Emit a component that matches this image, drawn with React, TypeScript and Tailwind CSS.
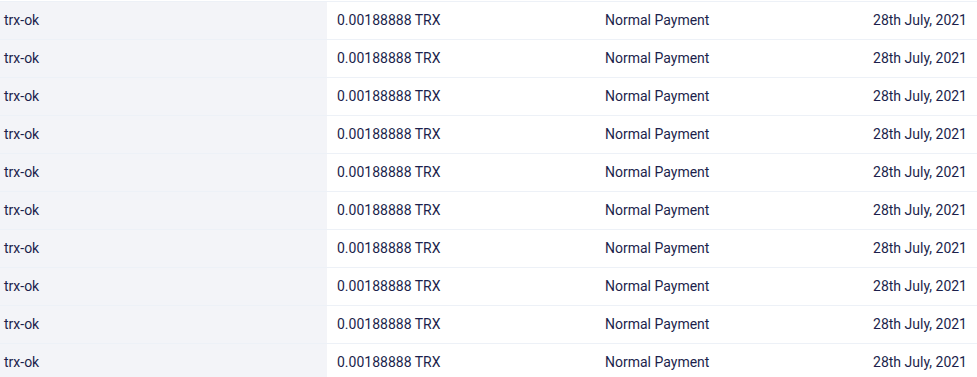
import React from "react";

export default function App() {
  const rows = Array.from({ length: 10 });
  return (
    <div className="w-[977px] h-[377px] overflow-hidden bg-white pt-px" style={{ fontFamily: "Roboto, 'Liberation Sans', sans-serif" }}>
      <div className="border-t border-[#edf1f7]">
        {rows.map((_, i) => (
          <div key={i} className="grid grid-cols-[327px_268px_1fr_auto] h-[38px] border-b border-[#edf1f7] text-[14px] text-[#1c1f4c]">
            <div className="bg-[#f3f4f8] flex items-center pl-[4px]">trx-ok</div>
            <div className="flex items-center pl-[10px]">0.00188888 TRX</div>
            <div className="flex items-center pl-[10px]">Normal Payment</div>
            <div className="flex items-center pr-[10px]">28th July, 2021</div>
          </div>
        ))}
      </div>
    </div>
  );
}
